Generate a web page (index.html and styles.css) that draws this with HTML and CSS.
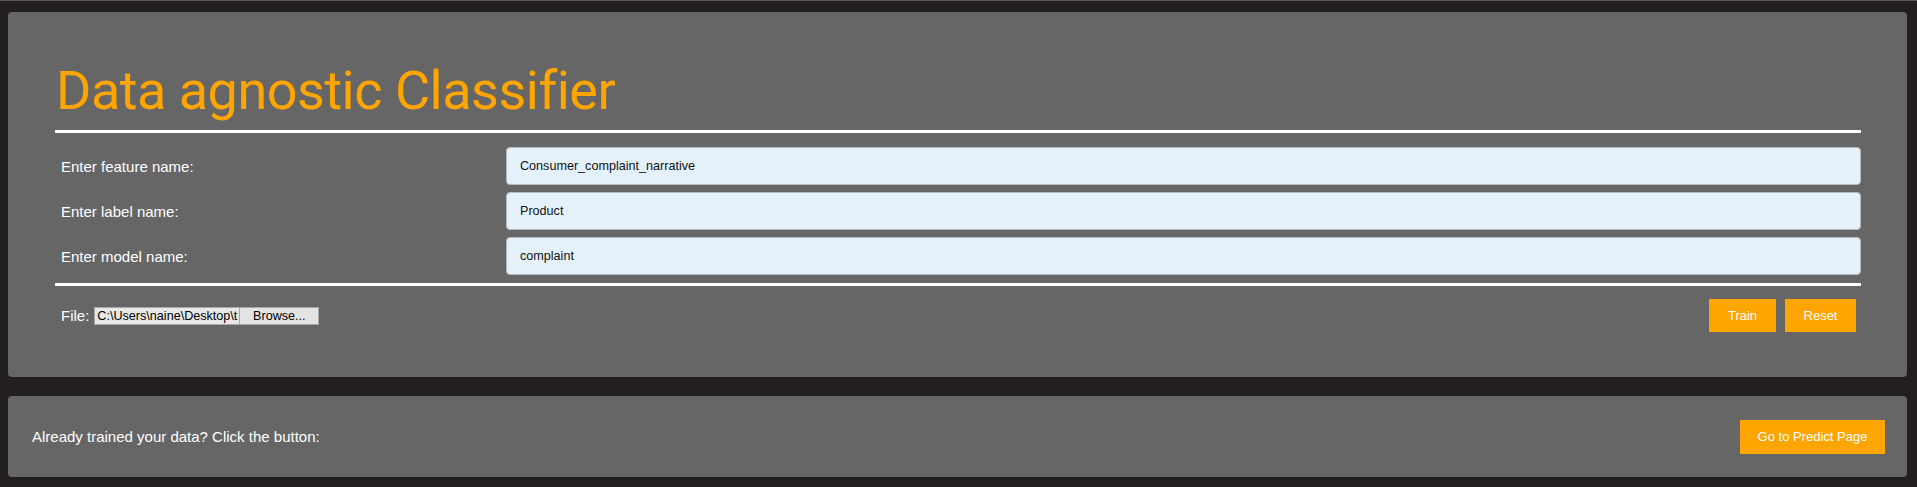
FILE: index.html
```html
<!DOCTYPE html>
<html lang="en">
<head>
<meta charset="utf-8">
<title>Data agnostic Classifier</title>
<link rel="stylesheet" href="styles.css">
</head>
<body>
  <section class="card card-train">
    <h1 class="title">Data agnostic Classifier</h1>
    <hr class="rule">
    <div class="form-grid">
      <label class="field-label">Enter feature name:</label>
      <input class="field-input" type="text" value="Consumer_complaint_narrative">
      <label class="field-label">Enter label name:</label>
      <input class="field-input" type="text" value="Product">
      <label class="field-label">Enter model name:</label>
      <input class="field-input" type="text" value="complaint">
    </div>
    <hr class="rule rule-bottom">
    <div class="actions-row">
      <div class="file-group">
        <span class="file-label">File:</span>
        <span class="file-picker">
          <span class="file-path">C:\Users\naine\Desktop\t</span>
          <span class="file-browse">Browse...</span>
        </span>
      </div>
      <div class="buttons">
        <button class="btn btn-train">Train</button>
        <button class="btn btn-reset">Reset</button>
      </div>
    </div>
  </section>
  <section class="card card-predict">
    <span class="predict-text">Already trained your data? Click the button:</span>
    <button class="btn btn-predict">Go to Predict Page</button>
  </section>
</body>
</html>
```
FILE: styles.css
```css
html, body {
  margin: 0;
  padding: 0;
}
body {
  background: #231f20;
  border-top: 1px solid #585858;
  font-family: "Liberation Sans", Arial, sans-serif;
  color: #ffffff;
  height: 486px;
  overflow: hidden;
}
.card {
  background: #666666;
  border-radius: 4px;
  margin-left: 8px;
  margin-right: 10px;
}
.card-train {
  margin-top: 11px;
  padding: 47px 46px 45px 47px;
}
.title {
  margin: 0;
  font-family: Roboto, "Liberation Sans", sans-serif;
  font-weight: 400;
  font-size: 54px;
  letter-spacing: -0.5px;
  line-height: 64px;
  color: #ffa500;
  padding-left: 1px;
}
.rule {
  border: 0;
  height: 3px;
  background: #ffffff;
  margin: 7px 0 0 0;
}
.rule-bottom {
  margin-top: 8px;
}
.form-grid {
  display: grid;
  grid-template-columns: 451px 1fr;
  row-gap: 7px;
  margin-top: 14px;
  align-items: center;
}
.field-label {
  padding-left: 6px;
  font-size: 15px;
  color: #ffffff;
}
.field-input {
  box-sizing: border-box;
  height: 38px;
  width: 100%;
  margin: 0;
  background: #e4f1fb;
  border: 1px solid #b9b9b9;
  border-radius: 4px;
  padding: 0 13px;
  font-family: "Liberation Sans", Arial, sans-serif;
  font-size: 12.6px;
  color: #111111;
  outline: none;
}
.actions-row {
  display: flex;
  align-items: center;
  justify-content: space-between;
  margin-top: 13px;
  padding: 0 5px 0 6px;
}
.file-group {
  display: flex;
  align-items: center;
}
.file-label {
  font-size: 15px;
  margin-right: 5px;
}
.file-picker {
  display: inline-flex;
  height: 18px;
  font-size: 12.6px;
  color: #000000;
}
.file-path {
  box-sizing: border-box;
  width: 145px;
  height: 18px;
  line-height: 16px;
  padding-left: 2px;
  background: #e8e8e8;
  border: 1px solid #a8a8a8;
  border-right: 0;
  white-space: nowrap;
}
.file-browse {
  box-sizing: border-box;
  width: 80px;
  height: 18px;
  line-height: 16px;
  text-align: center;
  background: #e3e3e3;
  border: 1px solid #a8a8a8;
}
.buttons {
  display: flex;
  gap: 9px;
}
.btn {
  height: 33px;
  padding: 0;
  border: 0;
  background: #ffa500;
  color: #ffffff;
  font-family: "Liberation Sans", Arial, sans-serif;
  font-size: 13px;
  text-align: center;
  cursor: pointer;
}
.btn-train {
  width: 67px;
}
.btn-reset {
  width: 71px;
}
.card-predict {
  margin-top: 19px;
  height: 81px;
  box-sizing: border-box;
  padding: 0 22px 0 24px;
  display: flex;
  align-items: center;
  justify-content: space-between;
}
.predict-text {
  font-size: 15px;
}
.btn-predict {
  width: 145px;
  height: 34px;
}
```
